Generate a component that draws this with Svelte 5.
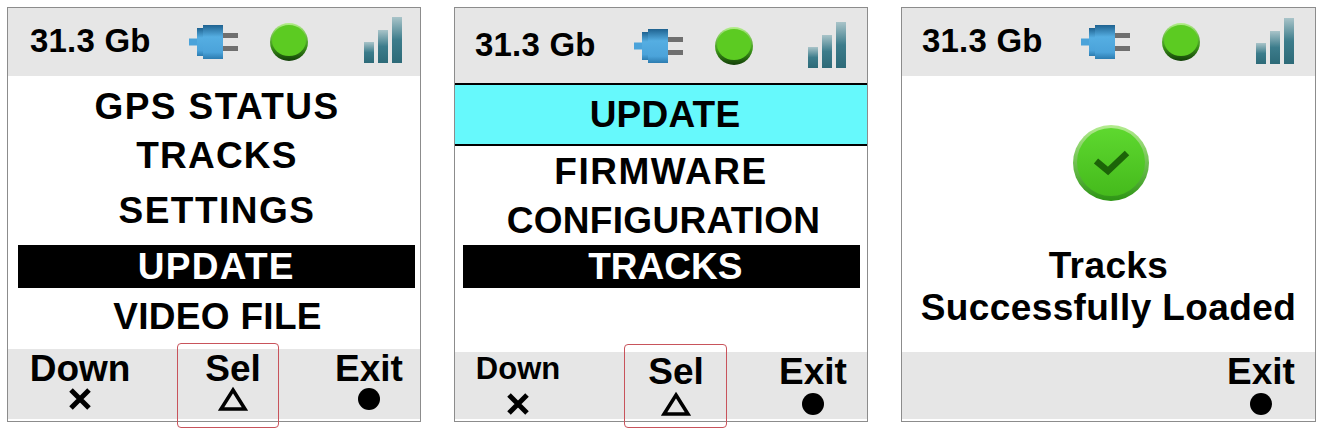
<script>
  const screens = [
    {
      id: 'menu',
      rows: [
        { label: 'GPS STATUS', h: 48, top: 6, ls: 1.4, dx: 6 },
        { label: 'TRACKS', h: 50, ls: 1.2, dx: 6 },
        { label: 'SETTINGS', h: 60, ls: 1.5, dx: 6 },
        { label: 'UPDATE', h: 43, top: 5, sel: true, ls: 1.3 },
        { label: 'VIDEO FILE', h: 57, ls: 0.3, dx: 7 }
      ],
      keys: [
        { label: 'Down', icon: 'x' },
        { label: 'Sel', icon: 'tri', boxed: true },
        { label: 'Exit', icon: 'dot' }
      ]
    },
    {
      id: 'update',
      title: 'UPDATE',
      rows: [
        { label: 'FIRMWARE', h: 50, top: 0, ls: 1.5 },
        { label: 'CONFIGURATION', h: 49, ls: 0.3, dx: 5 },
        { label: 'TRACKS', h: 43, sel: true, dx: 8 }
      ],
      keys: [
        { label: 'Down', icon: 'x', small: true },
        { label: 'Sel', icon: 'tri', boxed: true },
        { label: 'Exit', icon: 'dot' }
      ]
    },
    {
      id: 'done',
      done: true,
      keys: [{ label: 'Exit', icon: 'dot' }]
    }
  ];
</script>

{#snippet plug(id)}
  <svg class="plug" width="54" height="36" viewBox="0 0 54 36">
    <defs>
      <linearGradient id="plug-{id}" x1="0" y1="0" x2="0" y2="1">
        <stop offset="0" stop-color="#1f6290" />
        <stop offset="0.35" stop-color="#55aee2" />
        <stop offset="0.8" stop-color="#4ba3da" />
        <stop offset="1" stop-color="#2c7cb0" />
      </linearGradient>
    </defs>
    <rect x="33" y="9" width="17" height="5" fill="#6f6f6f" />
    <rect x="33" y="22" width="17" height="5" fill="#6f6f6f" />
    <rect x="1" y="14.5" width="9" height="7" fill="#4ba3da" />
    <rect x="9" y="4" width="6" height="28" fill="url(#plug-{id})" />
    <rect x="15" y="1" width="20" height="34" fill="url(#plug-{id})" />
  </svg>
{/snippet}

{#snippet led(id)}
  <svg class="led" width="40" height="38" viewBox="0 0 40 38">
    <defs>
      <linearGradient id="led-{id}" x1="0" y1="0" x2="0" y2="1">
        <stop offset="0" stop-color="#b4ee8a" />
        <stop offset="0.6" stop-color="#3f9a1a" />
        <stop offset="1" stop-color="#123f08" />
      </linearGradient>
    </defs>
    <circle cx="20" cy="19" r="19" fill="url(#led-{id})" />
    <ellipse cx="20" cy="17.5" rx="17" ry="15.5" fill="#5ccb22" />
  </svg>
{/snippet}

{#snippet signal(id)}
  <svg class="signal" width="40" height="46" viewBox="0 0 40 46">
    <defs>
      <linearGradient id="bar-{id}" x1="0" y1="0" x2="0" y2="1">
        <stop offset="0" stop-color="#a9c4c9" />
        <stop offset="0.5" stop-color="#3c7c8b" />
        <stop offset="1" stop-color="#2d6a78" />
      </linearGradient>
    </defs>
    <rect x="0" y="25" width="10" height="21" fill="url(#bar-{id})" />
    <rect x="14" y="13" width="10" height="33" fill="url(#bar-{id})" />
    <rect x="28" y="0" width="10" height="46" fill="url(#bar-{id})" />
  </svg>
{/snippet}

{#snippet keyIcon(kind)}
  <svg class="key-icon" width="30" height="26" viewBox="0 0 30 26">
    {#if kind === 'x'}
      <path d="M6 4 L24 22 M24 4 L6 22" stroke="#000" stroke-width="5" fill="none" />
    {:else if kind === 'tri'}
      <path d="M15 4 L27 23 L3 23 Z" stroke="#000" stroke-width="3.6" fill="none" />
    {:else}
      <circle cx="15" cy="13" r="11" fill="#000" />
    {/if}
  </svg>
{/snippet}

<div class="page">
  {#each screens as s}
    <section class="panel {s.id}">
      <header class="head">
        <span class="size">31.3 Gb</span>
        {@render plug(s.id)}
        {@render led(s.id)}
        {@render signal(s.id)}
      </header>

      <div class="body">
        {#if s.title}
          <div class="title">{s.title}</div>
        {/if}

        {#if s.done}
          <div class="result">
            <svg class="check" width="78" height="78" viewBox="0 0 78 78">
              <defs>
                <linearGradient id="ring" x1="0" y1="0" x2="0" y2="1">
                  <stop offset="0" stop-color="#b4ec90" />
                  <stop offset="1" stop-color="#2c9413" />
                </linearGradient>
                <linearGradient id="disc" x1="0" y1="0" x2="0" y2="1">
                  <stop offset="0" stop-color="#5ed82f" />
                  <stop offset="1" stop-color="#45ba1c" />
                </linearGradient>
              </defs>
              <circle cx="39" cy="39" r="38" fill="url(#ring)" />
              <circle cx="39" cy="38" r="34" fill="url(#disc)" />
              <path d="M24 37 L36 47 L55 29" stroke="#1c6408" stroke-width="6.5" fill="none" />
            </svg>
            <p class="message">Tracks<br />Successfully Loaded</p>
          </div>
        {:else}
          {#each s.rows as r}
            <div
              class="row"
              class:sel={r.sel}
              style="height: {r.h}px; margin-top: {r.top ?? 0}px; letter-spacing: {r.ls ?? 0}px; padding-left: {r.dx ?? 0}px"
            >
              {r.label}
            </div>
          {/each}
        {/if}
      </div>

      <footer class="foot">
        {#each s.keys as k}
          <div class="key" class:boxed={k.boxed}>
            <span class="key-label" class:small={k.small}>{k.label}</span>
            {@render keyIcon(k.icon)}
          </div>
        {/each}
      </footer>
    </section>
  {/each}
</div>

<style>
  :global(body) {
    margin: 0;
    background: #fff;
  }
  .page {
    width: 1320px;
    height: 433px;
    box-sizing: border-box;
    padding: 7px 4px 0 7px;
    display: grid;
    grid-template-columns: 414px 414px 415px;
    column-gap: 33px;
    font-family: "Liberation Sans", Arial, sans-serif;
    color: #000;
  }
  .panel {
    height: 415px;
    box-sizing: border-box;
    border: 1.5px solid #8c8c8c;
    padding-bottom: 2px;
    display: flex;
    flex-direction: column;
  }
  .head {
    flex: none;
    height: 68px;
    background: #e6e6e6;
    display: flex;
    align-items: center;
    padding: 0 16px 0 22px;
  }
  .update .head {
    height: 75px;
    padding: 0 19px 0 20px;
  }
  .done .head {
    padding: 0 19px 0 20px;
  }
  .size {
    font-size: 33px;
    font-weight: 700;
    letter-spacing: 0.2px;
    width: 158px;
    margin-top: -2px;
    white-space: nowrap;
  }
  .plug {
    margin-right: 27px;
  }
  .signal {
    margin-left: auto;
    margin-top: -5px;
  }
  .update .signal,
  .done .signal {
    margin-top: -2px;
  }
  .body {
    flex: 1;
    display: flex;
    flex-direction: column;
    min-height: 0;
  }
  .title {
    flex: none;
    height: 59px;
    background: #66f9fc;
    border-top: 2px solid #000;
    border-bottom: 2px solid #000;
    padding-left: 8px;
    display: flex;
    align-items: center;
    justify-content: center;
    font-size: 37px;
    font-weight: 700;
    letter-spacing: 0.2px;
  }
  .row {
    flex: none;
    display: flex;
    align-items: center;
    justify-content: center;
    font-size: 37px;
    font-weight: 700;
    line-height: 1;
  }
  .row.sel {
    background: #000;
    color: #fff;
  }
  .menu .row.sel {
    margin-left: 9.5px;
    margin-right: 5px;
  }
  .update .row.sel {
    margin-left: 8px;
    margin-right: 7.5px;
  }
  .result {
    display: flex;
    flex-direction: column;
    align-items: center;
    padding-top: 48px;
  }
  .check {
    margin-left: 4px;
  }
  .message {
    margin: 43px 0 0;
    text-align: center;
    font-size: 37px;
    font-weight: 700;
    letter-spacing: 0.4px;
    line-height: 42px;
  }
  .foot {
    flex: none;
    height: 67px;
    background: #e6e6e6;
    display: grid;
    grid-template-columns: 158px 137px 100px;
    padding-left: 13px;
    --icon-gap: 0px;
    --box-top: -8px;
    --box-left: -2px;
    --box-right: -1px;
  }
  .menu .foot {
    height: 70px;
    grid-template-columns: 153px 136px 100px;
    padding-left: 22px;
    --icon-gap: -2px;
    --box-top: -6px;
    --box-left: -6px;
    --box-right: 4px;
  }
  .done .foot {
    grid-template-columns: 100px;
    padding-left: 309px;
  }
  .key {
    position: relative;
    width: 100px;
    display: flex;
    flex-direction: column;
    align-items: center;
    padding-top: 1px;
  }
  .key-label {
    font-size: 37px;
    font-weight: 700;
    line-height: 38px;
  }
  .key-label.small {
    font-size: 31px;
    margin-top: -3px;
    margin-bottom: 3px;
  }
  .key-icon {
    margin-top: var(--icon-gap);
  }
  /* red callout around the selected softkey */
  .key.boxed::after {
    content: "";
    position: absolute;
    top: var(--box-top);
    bottom: -9px;
    left: var(--box-left);
    right: var(--box-right);
    border: 1.5px solid #c8535b;
    border-radius: 4px;
  }
</style>
